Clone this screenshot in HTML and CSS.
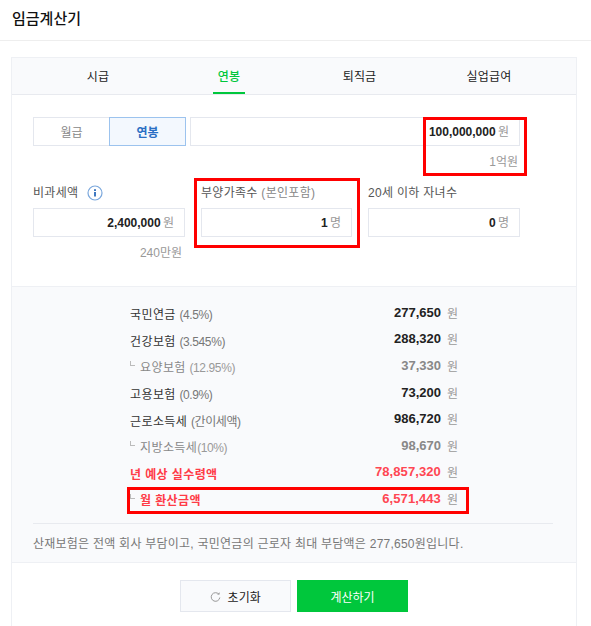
FILE: index.html
```html
<!DOCTYPE html>
<html lang="ko">
<head>
    <meta charset="UTF-8">
    <meta name="viewport" content="width=device-width, initial-scale=1.0">
    <title>임금계산기</title>
    <link rel="stylesheet" href="styles.css">
</head>
<body>

<!-- Page title -->
<header class="page-header">
    <h1>임금계산기</h1>
</header>

<div class="calc-card">
    <!-- Tabs -->
    <div class="tabs">
        <a href="#" class="tab">시급</a>
        <a href="#" class="tab active">연봉</a>
        <a href="#" class="tab">퇴직금</a>
        <a href="#" class="tab">실업급여</a>
    </div>

    <!-- Inputs -->
    <div class="form-area">
        <div class="salary-row">
            <div class="toggle">
                <button class="toggle-btn">월급</button>
                <button class="toggle-btn selected">연봉</button>
            </div>
            <div class="field salary-field"><b>100,000,000</b> <span class="unit">원</span></div>
        </div>
        <div class="hint hint-salary">1억원</div>

        <div class="options">
            <div class="option">
                <div class="option-label"><span>비과세액</span><svg class="info-icon" width="16" height="16" viewBox="0 0 16 16">
                        <circle cx="8" cy="8" r="7" fill="#fff" stroke="#7aa7dc" stroke-width="1.2"/>
                        <rect x="7" y="7" width="2" height="4.5" fill="#3f78c0"/>
                        <rect x="7" y="4.2" width="2" height="1.8" fill="#3f78c0"/>
                    </svg></div>
                <div class="field"><b>2,400,000</b> <span class="unit">원</span></div>
                <div class="hint">240만원</div>
            </div>
            <div class="option">
                <div class="option-label"><span>부양가족수 <span class="muted">(본인포함)</span></span></div>
                <div class="field"><b>1</b> <span class="unit">명</span></div>
            </div>
            <div class="option">
                <div class="option-label"><span>20세 이하 자녀수</span></div>
                <div class="field"><b>0</b> <span class="unit">명</span></div>
            </div>
        </div>
    </div>

    <!-- Results -->
    <div class="result-area">
        <ul class="result-list">
            <li class="result-row"><span>국민연금 <small>(4.5%)</small></span><span class="amount"><b>277,650</b><i>원</i></span></li>
            <li class="result-row"><span>건강보험 <small>(3.545%)</small></span><span class="amount"><b>288,320</b><i>원</i></span></li>
            <li class="result-row sub"><span>요양보험 <small>(12.95%)</small></span><span class="amount"><b>37,330</b><i>원</i></span></li>
            <li class="result-row"><span>고용보험 <small>(0.9%)</small></span><span class="amount"><b>73,200</b><i>원</i></span></li>
            <li class="result-row"><span>근로소득세 <small>(간이세액)</small></span><span class="amount"><b>986,720</b><i>원</i></span></li>
            <li class="result-row sub"><span>지방소득세<small>(10%)</small></span><span class="amount"><b>98,670</b><i>원</i></span></li>
            <li class="result-row total"><span>년 예상 실수령액</span><span class="amount"><b>78,857,320</b><i>원</i></span></li>
            <li class="result-row total sub"><span>월 환산금액</span><span class="amount"><b>6,571,443</b><i>원</i></span></li>
        </ul>
        <p class="note">산재보험은 전액 회사 부담이고, 국민연금의 근로자 최대 부담액은 277,650원입니다.</p>
    </div>

    <!-- Buttons -->
    <div class="actions">
        <button class="reset-button">
            <svg width="11" height="11" viewBox="0 0 11 11" fill="none">
                <path d="M8.8 2.2A4.3 4.3 0 1 0 9.8 5.5" stroke="#999" stroke-width="1"/>
                <path d="M7 2.6h2.6V0.2z" fill="#999"/>
            </svg>
            초기화
        </button>
        <button class="calc-button">계산하기</button>
    </div>
</div>

<!-- Red annotation boxes -->
<div class="mark mark-salary"></div>
<div class="mark mark-family"></div>
<div class="mark mark-monthly"></div>

</body>
</html>
```

FILE: styles.css
```css
body {
    font-family: "Liberation Sans", "Noto Sans CJK KR", sans-serif;
    font-size: 12px;
    color: #333;
    background-color: white;
    margin: 0;
    padding: 0;
    height: 626px;
    overflow: hidden;
    position: relative;
}
.page-header {
    height: 40px;
    border-bottom: 1px solid #eee;
    padding-left: 12px;
}
.page-header h1 {
    margin: 0;
    font-size: 15px;
    line-height: 37px;
    font-weight: 500;
    color: #111;
}
.calc-card {
    margin: 16px 14px 0 11px;
    height: 569px;
    box-sizing: border-box;
    border: 1px solid #eef0f4;
    border-bottom: none;
}
/* Tabs */
.tabs {
    display: grid;
    grid-template-columns: 131px 131px 130px 129px;
    padding-left: 20.5px;
    height: 36px;
    background-color: #f9fafc;
    border-bottom: 1px solid #e8eaef;
}
.tab {
    width: 32px;
    margin: 0 auto;
    height: 36px;
    box-sizing: border-box;
    line-height: 38px;
    white-space: nowrap;
    text-decoration: none;
    letter-spacing: 0.2px;
    color: #222;
    display: flex;
    justify-content: center;
}
.tab.active {
    color: #00c73c;
    font-weight: 500;
    border-bottom: 2px solid #00c73c;
}
/* Inputs */
.form-area {
    height: 191px;
    padding: 22px 21px 0;
    box-sizing: border-box;
}
.salary-row {
    display: flex;
    gap: 5px;
}
.toggle {
    display: flex;
}
.toggle-btn {
    width: 77px;
    height: 29px;
    padding: 0;
    font: inherit;
    color: #888;
    background-color: white;
    border: 1px solid #e4e7ee;
    margin-right: -1px;
}
.toggle-btn.selected {
    position: relative;
    color: #2a6fc4;
    font-weight: 700;
    background-color: #f3f8fe;
    border-color: #9cc3ee;
}
.field {
    height: 29px;
    line-height: 29px;
    border: 1px solid #e4e7ee;
    box-sizing: border-box;
    text-align: right;
    padding-right: 10px;
    color: #222;
}
.field b {
    color: #222;
    font-weight: 700;
}
.unit {
    color: #999;
    margin-left: -1px;
}
.salary-field {
    width: 330px;
}
.hint {
    color: #999;
    text-align: right;
    padding-right: 3px;
    margin-top: 8px;
    line-height: 17px;
}
.hint-salary {
    width: 487px;
    box-sizing: border-box;
    padding-right: 2px;
}
.options {
    display: grid;
    grid-template-columns: 152px 151px 152px;
    column-gap: 16px;
    margin-top: 9px;
}
.option-label {
    height: 28px;
    line-height: 27px;
    color: #555;
    letter-spacing: 0.3px;
    display: flex;
    align-items: flex-start;
}
.info-icon {
    margin: 5px 0 0 9px;
}
.muted {
    color: #888;
}
/* Results */
.result-area {
    background-color: #f9fafc;
    border-top: 1px solid #eef0f4;
    border-bottom: 1px solid #eef0f4;
    padding: 12px 23px 0 21px;
    height: 277px;
    box-sizing: border-box;
}
.result-list {
    list-style: none;
    margin: 0;
    padding: 0 0 11px;
    border-bottom: 1px solid #e8eaef;
}
.result-row {
    display: flex;
    justify-content: space-between;
    align-items: center;
    height: 26.6px;
    margin: 0 0 0 97px;
    width: 328px;
    color: #333;
}
.result-row > span:first-child {
    margin-top: 3px;
    letter-spacing: 0.4px;
}
.result-row small {
    font-size: 12px;
    letter-spacing: -0.4px;
    color: #777;
}
.amount {
    display: flex;
    align-items: center;
    gap: 6px;
}
.amount b {
    font-size: 13px;
    color: #222;
}
.amount i {
    font-style: normal;
    color: #999;
}
.result-row.sub {
    color: #888;
}
.result-row.sub > span:first-child {
    padding-left: 10px;
    position: relative;
}
.result-row.sub > span:first-child::before {
    content: "";
    position: absolute;
    left: 0;
    top: 3px;
    width: 4px;
    height: 4px;
    border-left: 1px solid #bbb;
    border-bottom: 1px solid #bbb;
}
.result-row.sub small {
    color: #999;
}
.result-row.sub .amount b {
    color: #888;
}
.result-row.total {
    color: #ff3b47;
    font-weight: 700;
}
.result-row.total .amount b {
    color: #ff4652;
    letter-spacing: 0.1px;
}
.result-row.total .amount i {
    font-weight: 400;
}
.note {
    margin: 12px 0 0;
    color: #777;
    line-height: 17px;
    letter-spacing: 0.24px;
}
/* Buttons */
.actions {
    display: flex;
    justify-content: center;
    gap: 6px;
    padding-top: 17px;
}
.reset-button, .calc-button {
    width: 111px;
    height: 32px;
    padding: 0;
    font: inherit;
    box-sizing: border-box;
    cursor: pointer;
}
.reset-button {
    color: #222;
    background-color: #f9fafc;
    border: 1px solid #e4e7ee;
}
.reset-button svg {
    margin-right: 3px;
    vertical-align: -1px;
}
.calc-button {
    color: white;
    background-color: #00c73c;
    border: none;
}
/* Red annotation boxes drawn over the screenshot */
.mark {
    position: absolute;
    border: 3px solid #f00;
    box-sizing: border-box;
}
.mark-salary {
    left: 423px;
    top: 117px;
    width: 104px;
    height: 59px;
}
.mark-family {
    left: 194px;
    top: 178px;
    width: 166px;
    height: 70px;
}
.mark-monthly {
    left: 127px;
    top: 487px;
    width: 342px;
    height: 27px;
}
```
